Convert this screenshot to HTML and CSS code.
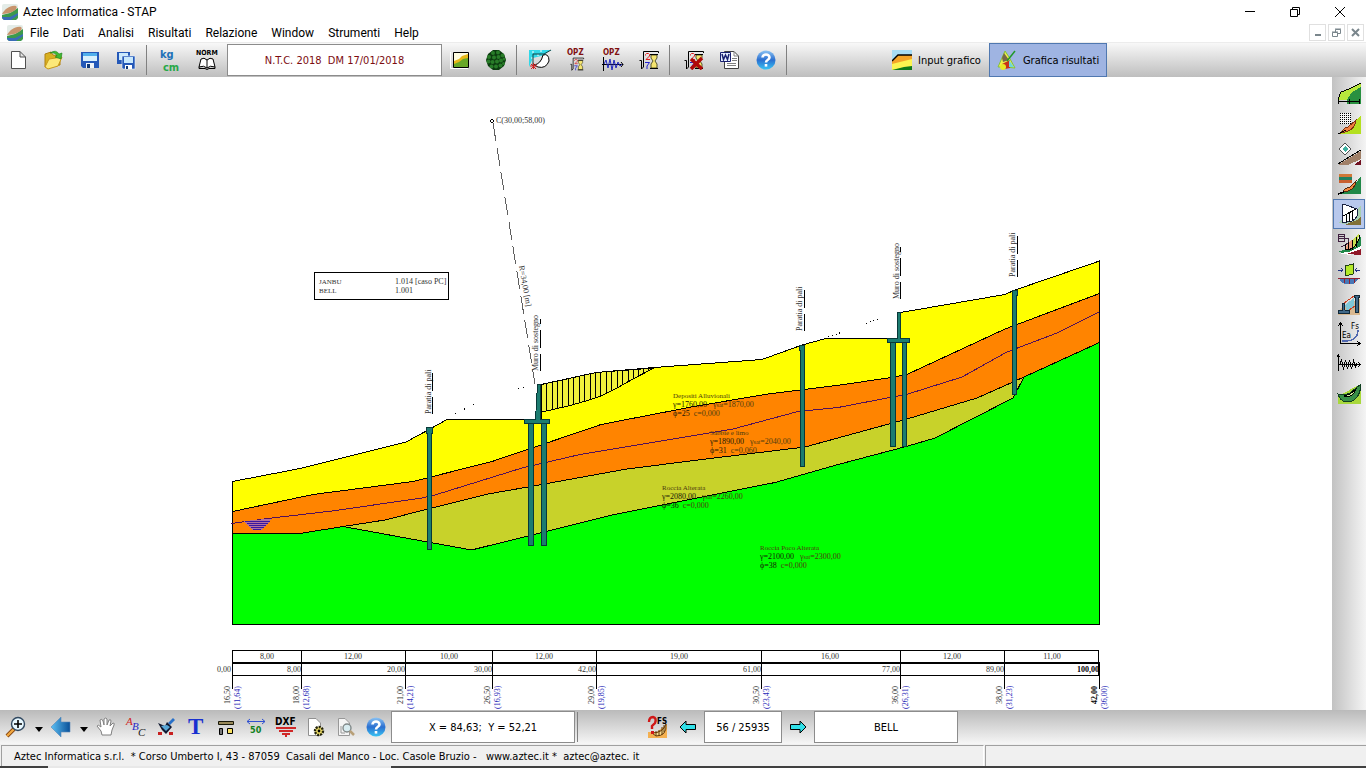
FILE: index.html
```html
<!DOCTYPE html>
<html lang="it">
    <head>
        <meta charset="utf-8">
        <title>Aztec Informatica - STAP</title>
        <link rel="stylesheet" href="styles.css">
    </head>
    <body>
        <svg class="defs" width="0" height="0" aria-hidden="true">
            <defs>
                <linearGradient id="blue" x1="0" y1="0" x2="0" y2="1">
                    <stop offset="0" stop-color="#8cc4f4"/>
                    <stop offset="0.5" stop-color="#2b6fd0"/>
                    <stop offset="1" stop-color="#38c4f4"/>
                </linearGradient>
                <linearGradient id="arrow" x1="0" y1="0" x2="1" y2="0">
                    <stop offset="0" stop-color="#5cc0f4"/>
                    <stop offset="1" stop-color="#0a5098"/>
                </linearGradient>
                <symbol id="logo" viewBox="0 0 16 16">
                    <rect width="16" height="16" rx="2" fill="#e4ece8"/>
                    <path d="M0 11L8 9L16 4V14L14 16H2L0 14Z" fill="#3c9a4c"/>
                    <path d="M0 13L8 13L16 9V11L9 16H2L0 14Z" fill="#3a6cb8"/>
                    <path d="M0 10C3 5 8 1 14 2C17 5 10 10 0 10Z" fill="#c8946c"/>
                </symbol>
                <symbol id="help" viewBox="0 0 20 20">
                    <circle cx="10" cy="10" r="9.5" fill="url(#blue)"/>
                    <path d="M6.5 7.5C6.5 3.5 13.5 3.5 13.5 7.5C13.5 10 10 9.5 10 12.5" fill="none" stroke="#fff" stroke-width="2.6"/>
                    <rect x="8.7" y="14" width="2.6" height="2.6" fill="#fff"/>
                </symbol>
                <symbol id="calc" viewBox="0 0 20 20">
                    <path d="M0.500 10.500H2.500V19L4.500 17V1.500H19.500V3" fill="none" stroke="#000"/>
                    <path d="M12 5H18V8L16 11L18 14V18H12V14L14 11L12 8Z" fill="#f4e470" stroke="#303010" stroke-width=".8"/>
                    <path d="M11 4.500H19M11 18.500H19" stroke="#000"/>
                    <path d="M6.500 5.500V4.500L7.500 3.500H9.500L10.500 4.500V6L7 9.500H11" fill="none" stroke="#e02020"/>
                    <path d="M6 12.500H10.500L8 16V19" fill="none" stroke="#2020d0"/>
                </symbol>
            </defs>
        </svg>

        <header class="titlebar">
            <svg class="logo"><use href="#logo"/></svg>
            <span class="title">Aztec Informatica - STAP</span>
            <div class="window-controls">
                <button type="button" aria-label="Riduci"><svg width="12" height="12"><path d="M1 5.500H11" stroke="#000"/></svg></button>
                <button type="button" aria-label="Ripristina"><svg width="12" height="12" fill="none" stroke="#000"><path d="M1.500 3.500H8.500V10.500H1.500ZM3.500 3.500V1.500H10.500V8.500H8.500"/></svg></button>
                <button type="button" aria-label="Chiudi"><svg width="12" height="12" stroke="#000"><path d="M1 1L11 11M11 1L1 11"/></svg></button>
            </div>
        </header>

        <nav class="menubar">
            <svg class="logo"><use href="#logo"/></svg>
            <ul class="menu-items">
                <li><a href="#">File</a></li>
                <li><a href="#">Dati</a></li>
                <li><a href="#">Analisi</a></li>
                <li><a href="#">Risultati</a></li>
                <li><a href="#">Relazione</a></li>
                <li><a href="#">Window</a></li>
                <li><a href="#">Strumenti</a></li>
                <li><a href="#">Help</a></li>
            </ul>
            <div class="mdi-controls">
                <button type="button" aria-label="Riduci"><svg width="9" height="9"><path d="M2 7H8" stroke="#7a868c" stroke-width="2"/></svg></button>
                <button type="button" aria-label="Ripristina"><svg width="9" height="9" fill="none" stroke="#7a868c"><path d="M0.500 4.500H5.500V8.500H0.500ZM0 4H6M3.500 4V1.500H8.500V5.500H6M3 1H9"/></svg></button>
                <button type="button" aria-label="Chiudi"><svg width="9" height="9" stroke="#7a868c" stroke-width="2"><path d="M1 1L8 8M8 1L1 8"/></svg></button>
            </div>
        </nav>

        <div class="toolbar">
            <button class="tool" type="button" aria-label="Nuovo"><svg width="20" height="20" viewBox="0 0 20 20"><path d="M3.500 1.500H12L17.500 7V18.500H3.500ZM12 1.500V7H17.500" fill="#fff" stroke="#505050"/></svg></button>
            <button class="tool" type="button" aria-label="Apri"><svg width="20" height="20" viewBox="0 0 20 20"><path d="M1 17V4L7 2L9 5L16 6V15Z" fill="#d8b020" stroke="#b08010"/><path d="M1 17L5 9L18 7L14 16L4 19Z" fill="#fce878" stroke="#c89818"/><path d="M6 3Q12 -1 15 4L18 3L17 9L11 7L13 6Q11 2 6 3Z" fill="#40b830" stroke="#188018" stroke-width=".6"/></svg></button>
            <button class="tool" type="button" aria-label="Salva"><svg width="20" height="20" viewBox="0 0 20 20"><path d="M1 2H19V18H3L1 16Z" fill="#2458b8"/><path d="M3 3H17V11H3Z" fill="#d8f0fc"/><path d="M3 3H17V6H3Z" fill="#50b0ec"/><path d="M6 13H14V18H6Z" fill="#f0f4f8"/><path d="M7 14H10V18H7Z" fill="#103878"/></svg></button>
            <button class="tool" type="button" aria-label="Salva tutto"><svg width="20" height="20" viewBox="0 0 20 20"><path d="M1 2H14V14H1Z" fill="#2458b8"/><path d="M3 3H12V10H3Z" fill="#c8e8fc"/><path d="M6 6H19V19H7L6 18Z" fill="#2458b8" stroke="#e8f4ff" stroke-width=".6"/><path d="M8 7H17V13H8Z" fill="#c8e8fc"/><path d="M9 15H16V19H9Z" fill="#fff"/><path d="M10 16H12V19H10Z" fill="#103878"/></svg></button>
            <span class="separator"></span>
            <button class="tool" type="button" aria-label="Unità di misura"><svg width="24" height="28" viewBox="0 0 24 28"><text class="unit" x="1" y="12" fill="#2070b8">kg</text><text class="unit" x="4" y="25" fill="#28a848">cm</text></svg></button>
            <button class="tool" type="button" aria-label="Normativa"><svg width="24" height="24" viewBox="0 0 24 24"><text class="norm" x="1" y="7">NORM</text><path d="M12 12Q9 9 6 11L4 19Q9 17 12 20Q15 17 20 19L18 11Q15 9 12 12V20" fill="#fff" stroke="#000"/><path d="M4 19V20.500H10L12 21.500L14 20.500H20V19" fill="none" stroke="#000"/></svg></button>
            <input class="field norm-field" type="text" value="N.T.C. 2018  DM 17/01/2018" aria-label="Normativa corrente" readonly>
            <button class="tool" type="button" aria-label="Stratigrafia"><svg width="20" height="20" viewBox="0 0 20 20"><path d="M0.500 2V18.500H18" fill="none" stroke="#fff"/><path d="M4 3H18V17H4Z" fill="#fffce0"/><path d="M4 11L9 9L12 6L18 4V17H4Z" fill="#e8b818"/><path d="M4 14L9 12L13 9L18 8V17H4Z" fill="#68a828"/><path d="M3.500 2.500H18.500V17.500H3.500Z" fill="none" stroke="#000"/></svg></button>
            <button class="tool" type="button" aria-label="Terreni"><svg width="20" height="20" viewBox="0 0 20 20"><path d="M7 0H13L18 4L20 10L18 16L13 20H7L2 16L0 10L2 4Z" fill="#0c3c10"/><g fill="#287c28"><circle cx="7" cy="3" r="2"/><circle cx="12" cy="2.500" r="2"/><circle cx="16.500" cy="5.500" r="2"/><circle cx="3" cy="7" r="2"/><circle cx="8" cy="7.500" r="2"/><circle cx="12.500" cy="7" r="2"/><circle cx="2.500" cy="11.500" r="2"/><circle cx="6.500" cy="12" r="2"/><circle cx="11" cy="11.500" r="2"/><circle cx="15" cy="10.500" r="2"/><circle cx="18" cy="9" r="1.500"/><circle cx="5.500" cy="16.500" r="2"/><circle cx="10" cy="16.500" r="2"/><circle cx="14.500" cy="15.500" r="2"/><circle cx="17.500" cy="13.500" r="1.500"/></g></svg></button>
            <span class="separator"></span>
            <button class="tool" type="button" aria-label="Superfici"><svg width="24" height="22" viewBox="0 0 24 22"><path d="M0 1H24Q19 1 16 6L4 9L0 18Z" fill="#30d8e8"/><path d="M3 3H5M8 6H10M2 9H4M11 2H13" stroke="#fff"/><path d="M4 17V5H15L22 1" fill="none" stroke="#104040"/><path d="M14 6Q20 4 20 12Q17 20 9 18L5 16Q12 15 14 6Z" fill="#fff" stroke="#000"/><path d="M1 17H8M4.500 14V20M2 15L7 20M7 15L2 20" stroke="#d02020"/></svg></button>
            <button class="tool" type="button" aria-label="Opzioni analisi"><svg width="24" height="24" viewBox="0 0 24 24"><text class="opz" x="2" y="7">OPZ</text><svg x="3" y="9" width="18" height="14"><use href="#calc"/></svg></svg></button>
            <button class="tool" type="button" aria-label="Opzioni sismiche"><svg width="24" height="24" viewBox="0 0 24 24"><text class="opz" x="2" y="7">OPZ</text><path d="M2.500 9V23M1 16.500H22M20 14L22 16.500L20 19" fill="none" stroke="#000"/><path d="M3 16L5 12L7 20L9 11L11 22L13 12L15 20L17 14L19 18L21 16" fill="none" stroke="#2028c0"/></svg></button>
            <button class="tool" type="button" aria-label="Analisi"><svg width="20" height="20"><use href="#calc"/></svg></button>
            <span class="separator"></span>
            <button class="tool" type="button" aria-label="Annulla analisi"><svg width="20" height="20" viewBox="0 0 20 20"><use href="#calc"/><path d="M7 9L18 19M18 8L7 19" stroke="#b00808" stroke-width="3.500"/></svg></button>
            <button class="tool" type="button" aria-label="Relazione"><svg width="20" height="20" viewBox="0 0 20 20"><path d="M4.500 1.500H14L18.500 6V18.500H4.500Z" fill="#fff" stroke="#404040"/><path d="M14 1.500V6H18.500M12 8.500H17M12 10.500H17M7 13.500H16M7 15.500H16" fill="none" stroke="#808080"/><path d="M0.500 2.500H10.500V11.500H0.500Z" fill="#e8f0ff" stroke="#182070"/><path d="M2 4L3.500 9.500L5.500 5L7.500 9.500L9 4" fill="none" stroke="#182070" stroke-width="1.500"/></svg></button>
            <button class="tool" type="button" aria-label="Guida"><svg width="20" height="20"><use href="#help"/></svg></button>
            <span class="separator"></span>
            <div class="views">
                <button class="view" type="button"><svg width="20" height="20" viewBox="0 0 20 20"><path d="M0 0H20V20H0Z" fill="#a8dcf4"/><path d="M0 11L6 5H20V20H0Z" fill="#f4a428"/><path d="M0 14L20 9V20H0Z" fill="#fcf450"/><path d="M0 20L12 17L20 16V20Z" fill="#107818"/><path d="M0 11L6 5H20" fill="none" stroke="#000" stroke-width="1.400"/></svg>Input grafico</button>
                <button class="view active" type="button"><svg width="20" height="20" viewBox="0 0 20 20"><path d="M8 1L1 17H8L18 18L12 7Z" fill="#f0f048" stroke="#80c040"/><path d="M7 3L12 10L6 12L5 8Z" fill="#786848"/><path d="M5 14L13 10V18L8 19Z" fill="#c83018"/><path d="M12 10L17 17H12Z" fill="#70d8d8"/><path d="M10 11L18 1" stroke="#209828" stroke-width="1.500"/><circle cx="6" cy="17" r="3" fill="#e8e828"/></svg>Grafica risultati</button>
            </div>
        </div>

        <main class="workspace">
            <svg class="drawing" viewBox="0 77 1332 633" role="img" aria-label="Sezione del pendio">
                <!-- strata, from the bedrock up -->
                <path fill="#00ff00" d="M232.500 533.500H300L343 526.500L471 550L700 450L1099.500 342.500V624.500H232.500Z"/>
                <path class="layer" fill="#c8d22a" d="M343 526.500L471.500 550L560 528L610 515.500L697 498L775 482.500L840 464L908 446L935 438L1013 398L1024 377L1013 382L977 398L907 419L805 447L710 458.500L627 469L528 487L488 494L428 509L385 520Z"/>
                <path fill="#00ff00" d="M471.500 550L560 528L610 515.500L697 498L775 482.500L840 464L908 446L935 438L1013 398L1024 377L1099.500 342.500V624.500H471Z"/>
                <path class="layer" fill="#ff8400" d="M232.500 511.500L313 494.500L413 481.500L492 461.500L535 447L601 424.500L694 406.500L768 394L840 385L895 377L908 374L1005 329L1099.500 293.500V342.500L1024 377L1013 382L977 398L907 419L805 447L710 458.500L627 469L528 487L488 494L428 509L385 520L343 526.500L300 533.500H232.500Z"/>
                <path class="layer" fill="#ffff00" d="M232.500 481.500L300 468.500L406 442L430 429L447 419.500H541V384.500L596 372.500L654 367.500L762 359.500L802 345L826 338.500H900.500V312.500L1005 294.500L1015 290L1099.500 261V293.500L1005 329L908 374L895 377L840 385L768 394L694 406.500L601 424.500L535 447L492 461.500L413 481.500L313 494.500L232.500 511.500Z"/>
                <path class="line" d="M343 526.500L471.500 550L560 528L610 515.500L697 498L775 482.500L840 464L908 446L935 438L1013 398L1024 377"/>
                <path class="line" d="M232.500 481V624.500H1099.500V261"/>

                <!-- water table -->
                <path class="water" d="M231 523.500L272 518L332 511L422 498L435 495L522 468L580 454.500L652 442.500L733 429L798 411.500L838 407.500L908 394L962 377L1007 352L1057 333L1099 312"/>
                <path d="M244 521L272 518.500L262 530H252Z" fill="#b070a0"/>
                <path class="water-mark" d="M245 521.500H270M247 523.500H268M249 525.500H266M251 527.500H264M253 529.500H261"/>

                <!-- slices of the sliding mass -->
                <path class="layer" fill="#f2f23c" d="M541.500 384.500L596 372.500L654 368L633 379L617 388L601 396L586 401L570 405.500L553 409.500L541.500 412Z"/>
                <path class="line" d="M546.500 383.500V411M552.500 382V410M557.500 381V408M562.500 380V407M568.500 378.500V406M573.500 377.500V405M579.500 376V403M584.500 375V401M590.500 374V399M595.500 372.500V398M600.500 372V396M606.500 372V393M611.500 371.500V391M617.500 371V388M622.500 370.500V385M628.500 370V382M633.500 370V379M638.500 369.500V376M643.500 369V373M648.500 368.500V371"/>

                <!-- piles and retaining walls -->
                <g class="pile">
                    <path d="M427.500 433.500V549H431.500V433.500H432.500V427.500H426.500V433.500Z"/>
                    <path d="M528.500 423.500H533.500V545H528.500ZM541.500 423.500H546.500V545H541.500Z"/>
                    <path d="M535.500 419.500L537.500 384.500H540.500V419.500H549.500V423.500H524.500V419.500Z"/>
                    <path d="M800.500 350.500V466H804.500V345.500H799.500V350.500Z"/>
                    <path d="M890.500 342.500H895.500V446H890.500ZM902.500 342.500H906.500V446H902.500Z"/>
                    <path d="M897.500 338.500V312.500H900.500V338.500H909.500V342.500H887.500V338.500Z"/>
                    <path d="M1012.500 290.500H1017.500V295.500H1016.500V394H1012.500Z"/>
                </g>
                <path class="dots" d="M455 413.500L476 403.500" stroke-dasharray="1 9"/>
                <path class="dots" d="M518 388.500L527 386.500" stroke-dasharray="1 4"/>
                <path class="dots" d="M828 337L841 332.500M866 323.500L880 318.500" stroke-dasharray="1 3"/>

                <!-- centre and radius of the surface -->
                <path d="M492 119L494 121L492 123L490 121Z" fill="none" stroke="#000"/>
                <path d="M493 123L535 384" stroke="#606060" stroke-dasharray="18 7" fill="none"/>
                <text x="496" y="123">C(30,00;58,00)</text>
                <text transform="translate(519 266) rotate(80)">R=34,00 [m]</text>

                <path class="line" d="M314.500 272.500H448.500V299.500H314.500Z"/>
                <text x="319" y="284" class="small">JANBU</text>
                <text x="395" y="284">1.014&#160;[caso PC]</text>
                <text x="319" y="293" class="small">BELL</text>
                <text x="395" y="293">1.001</text>

                <!-- labels of the works -->
                <g>
                    <text transform="translate(431 414) rotate(-90)">Paratia di pali</text>
                    <text transform="translate(538 371) rotate(-90)">Muro di sostegno</text>
                    <text transform="translate(802 331) rotate(-90)">Paratia di pali</text>
                    <text transform="translate(899 299) rotate(-90)">Muro di sostegno</text>
                    <text transform="translate(1015 277) rotate(-90)">Paratia di pali</text>
                </g>
                <path class="line" d="M432.500 414V397M432.500 391V373M540.500 371V354M540.500 348V330M540.500 324V319M804.500 331V314M804.500 308V290M900.500 299V282M900.500 276V258M900.500 252V247M1017.500 277V260M1017.500 254V236"/>

                <g class="soil">
                    <text x="673" y="398" class="small">Depositi Alluvionali</text>
                    <text x="673" y="407"><tspan class="strong">γ=1760,00</tspan>&#160;&#160; γ<tspan class="sub">sat</tspan>=1870,00</text>
                    <text x="673" y="416"><tspan class="strong">ϕ=25</tspan>&#160; c=0,000</text>
                    <text x="710" y="435" class="small">Sabbie e limo</text>
                    <text x="710" y="444"><tspan class="strong">γ=1890,00</tspan>&#160;&#160; γ<tspan class="sub">sat</tspan>=2040,00</text>
                    <text x="710" y="453"><tspan class="strong">ϕ=31</tspan>&#160; c=0,060</text>
                    <text x="662" y="490" class="small">Roccia Alterata</text>
                    <text x="662" y="499"><tspan class="strong">γ=2080,00</tspan>&#160;&#160; γ<tspan class="sub">sat</tspan>=2260,00</text>
                    <text x="662" y="508"><tspan class="strong">ϕ=36</tspan>&#160; c=0,000</text>
                    <text x="760" y="550" class="small">Roccia Poco Alterata</text>
                    <text x="760" y="559"><tspan class="strong">γ=2100,00</tspan>&#160;&#160; γ<tspan class="sub">sat</tspan>=2300,00</text>
                    <text x="760" y="568"><tspan class="strong">ϕ=38</tspan>&#160; c=0,000</text>
                </g>

                <!-- distances and elevations -->
                <path class="line" d="M232 650.500H1099M232 675.500H1099M232.500 650V689M301.500 650V689M405.500 650V689M492.500 650V689M596.500 650V689M761.500 650V689M900.500 650V689M1004.500 650V689M1098.500 650V675M1099.500 663V689"/>
                <path d="M232 663H1100" stroke="#000" stroke-width="2"/>
                <g text-anchor="middle">
                    <text x="267" y="659">8,00</text><text x="353" y="659">12,00</text><text x="449" y="659">10,00</text><text x="544" y="659">12,00</text>
                    <text x="679" y="659">19,00</text><text x="830" y="659">16,00</text><text x="952" y="659">12,00</text><text x="1052" y="659">11,00</text>
                </g>
                <g text-anchor="end">
                    <text x="231" y="672">0,00</text><text x="301" y="672">8,00</text><text x="405" y="672">20,00</text><text x="492" y="672">30,00</text><text x="596" y="672">42,00</text>
                    <text x="761" y="672">61,00</text><text x="900" y="672">77,00</text><text x="1004" y="672">89,00</text><text x="1099" y="672" class="strong">100,00</text>
                </g>
                <g>
                    <text transform="translate(230 704) rotate(-90)">16,50</text><text transform="translate(299 704) rotate(-90)">18,00</text><text transform="translate(403 704) rotate(-90)">21,00</text>
                    <text transform="translate(490 704) rotate(-90)">26,50</text><text transform="translate(594 704) rotate(-90)">29,00</text><text transform="translate(759 704) rotate(-90)">30,50</text>
                    <text transform="translate(898 704) rotate(-90)">36,00</text><text transform="translate(1002 704) rotate(-90)">38,00</text><text class="strong" transform="translate(1097 704) rotate(-90)">42,00</text>
                </g>
                <g class="depth">
                    <text transform="translate(240 709) rotate(-90)">(11,64)</text><text transform="translate(309 709) rotate(-90)">(12,68)</text><text transform="translate(413 709) rotate(-90)">(14,21)</text>
                    <text transform="translate(500 709) rotate(-90)">(16,93)</text><text transform="translate(604 709) rotate(-90)">(19,85)</text><text transform="translate(769 709) rotate(-90)">(23,43)</text>
                    <text transform="translate(908 709) rotate(-90)">(26,31)</text><text transform="translate(1012 709) rotate(-90)">(31,23)</text><text transform="translate(1107 709) rotate(-90)">(36,00)</text>
                </g>
            </svg>

            <aside class="sidebar">
                <button type="button" aria-label="Pendio"><svg viewBox="0 0 24 24"><path d="M1 16L4 10L12 7L24 1V18H1Z" fill="#b8e83c"/><path d="M10 18L14 11L24 5V22H10Z" fill="#289040"/><path d="M1 17L4 10L12 7L24 1M1.500 16V22M1 19.500H23M12.500 17V22M22.500 17V22" fill="none" stroke="#000"/></svg></button>
                <button type="button" aria-label="Maglia centri"><svg viewBox="0 0 24 24"><path d="M3 1H14V12H3Z" fill="#f4f4f4"/><path d="M3 1.500H14M3 3.500H14M3 5.500H14M3 7.500H14M3 9.500H14M3 11.500H14" stroke="#000" stroke-dasharray="1 1"/><path d="M1 22L14 14L24 3V22Z" fill="#b4e020"/><path d="M4 21Q7 15 11 15L19 8Q18 19 4 21Z" fill="#f08040" stroke="#803010"/><path d="M1 22L9 18" stroke="#000"/></svg></button>
                <button type="button" aria-label="Tensioni"><svg viewBox="0 0 24 24"><path d="M8 1L14 7L8 13L2 7Z" fill="#fff" stroke="#505050"/><path d="M8 4L11 7L8 10L5 7Z" fill="#40b0a0"/><path d="M1 23L12 16L24 9V17L11 23Z" fill="#a08068"/><path d="M17 23L24 18V23Z" fill="#701020"/><path d="M1 22L12 15L24 8" fill="none" stroke="#000"/></svg></button>
                <button type="button" aria-label="Strati"><svg viewBox="0 0 24 24"><path d="M2 2H15V5H2Z" fill="#d07838"/><path d="M2 5H15V8H2Z" fill="#208060"/><path d="M2 8H15V11H2Z" fill="#c86030"/><path d="M4 22L15 16L24 4V22Z" fill="#208848"/><path d="M6 20Q8 15 12 16L19 9Q18 19 6 20Z" fill="#f08840" stroke="#502810"/><path d="M1 22L7 20" stroke="#000" stroke-width="1.500"/></svg></button>
                <button class="active" type="button" aria-label="Superfici e strisce"><svg viewBox="0 0 24 24"><path d="M8 23L20 17L24 8V23Z" fill="#807038"/><path d="M1 21L8 14L20 7L24 4V14L20 18L9 22Z" fill="#a8d0b0"/><path d="M5 14L6 2L20 7V14Q17 20 10 20H5Z" fill="#fff" stroke="#182040"/><path d="M9.500 12V20M12.500 10V20M15.500 8V18M6 14L19 7" fill="none" stroke="#000"/></svg></button>
                <button type="button" aria-label="Forze strisce"><svg viewBox="0 0 24 24"><path d="M1.500 2.500H7.500V9.500H1.500ZM2 4.500H7M2 6.500H7M7 6.500H11.500V11L4 15" fill="none" stroke="#402040"/><path d="M1 20L9 17L24 5V22L14 22Z" fill="#208848"/><path d="M8 17L11 11L15 8V17Z" fill="#f0a080"/><path d="M15 8L22 2L20 14L15 17Z" fill="#c8e050"/><path d="M1 21L12 20L24 14V18L13 23Z" fill="#fff"/><path d="M10 22L24 17V23Z" fill="#901828"/><path d="M8.500 17V12M11.500 18V10M15.500 18V8M19.500 15V5M8 18Q20 18 23 3" fill="none" stroke="#000"/></svg></button>
                <button type="button" aria-label="Azioni striscia"><svg viewBox="0 0 24 24"><path d="M8 4L16 2V12L8 14Z" fill="#b4e828" stroke="#204010"/><path d="M1 8H6M4 6L6 8L4 10M23 8H18M20 6L18 8L20 10" fill="none" stroke="#203080"/><path d="M2 16H22L17 22H8L4 20Z" fill="#4878b8"/><path d="M1 16.500H23M7 17V21M12 17V22M17 17V21" stroke="#902030"/></svg></button>
                <button type="button" aria-label="Muri"><svg viewBox="0 0 24 24"><path d="M1 19L13 10L23 7V23H1Z" fill="#d8b890"/><path d="M8 13L17 6V16L10 20Z" fill="#80c8d8"/><path d="M5 11H7L8 18H12V21H1V18H5Z" fill="#406888" stroke="#102838"/><path d="M17 3H22V5H21V20H18V5H17Z" fill="#406888" stroke="#102838"/><path d="M7 11L17 4M12 18L18 14" stroke="#c84020"/></svg></button>
                <button type="button" aria-label="Diagramma Ea Fs"><svg viewBox="0 0 24 24"><path d="M3.500 1V21.500H23M1 4L3.500 1L6 4M20 19L23 21.500L20 24" fill="none" stroke="#000"/><text class="axis" x="5" y="16">Ea</text><text class="axis" x="14" y="7">Fs</text><path d="M5 19Q21 20 21 8" fill="none" stroke="#5068b0" stroke-width="1.400"/></svg></button>
                <button type="button" aria-label="Accelerogramma"><svg viewBox="0 0 24 24"><path d="M1.500 3V19M0 5L1.500 3L3 5M1 12.500H23M21 10L23 12.500L21 15" fill="none" stroke="#000"/><path d="M3 12L4.500 7L6.500 18L8.500 8L10.500 17L12.500 8L14.500 17L16.500 9L18.500 15L20 11" fill="none" stroke="#000"/></svg></button>
                <button type="button" aria-label="Spostamenti"><svg viewBox="0 0 24 24"><path d="M1 22V14L24 2V22Z" fill="#a8d83c"/><path d="M1 12L7 13L13 11L24 2Q23 20 9 20Q3 19 1 12Z" fill="#389048" stroke="#104020"/><path d="M7 14L13 12L19 7Q17 15 8 15Z" fill="#d0f0a0" stroke="#000"/></svg></button>
            </aside>
        </main>

        <div class="toolbar toolbar-bottom">
            <button class="tool" type="button" aria-label="Zoom"><svg width="22" height="22" viewBox="0 0 22 22"><path d="M2 20L9 13" stroke="#804010" stroke-width="4"/><path d="M2 20L9 13" stroke="#f0a840" stroke-width="2.400"/><circle cx="13" cy="8" r="6.500" fill="#e8f8ff" stroke="#304860" stroke-width="1.400"/><path d="M9 8H17M13 4V12" stroke="#000" stroke-width="1.600"/></svg></button>
            <button class="drop" type="button" aria-label="Opzioni zoom"><svg width="8" height="5"><path d="M0 0H8L4 5Z"/></svg></button>
            <button class="tool" type="button" aria-label="Indietro"><svg width="22" height="22" viewBox="0 0 22 22"><path d="M1 11L11 1V6H20V16H11V21Z" fill="url(#arrow)" stroke="#5888b8" stroke-width=".6"/></svg></button>
            <button class="drop" type="button" aria-label="Viste precedenti"><svg width="8" height="5"><path d="M0 0H8L4 5Z"/></svg></button>
            <button class="tool" type="button" aria-label="Sposta"><svg width="20" height="20" viewBox="0 0 20 20"><path d="M6 18L5 14L1 9Q2 7 5 10L4 3Q6 1 7 4L8 8V2Q10 0 11 2V8L13 3Q15 2 15 4L14 9L17 6Q19 6 18 8L16 13L15 18Z" fill="#fff" stroke="#808080"/></svg></button>
            <button class="tool" type="button" aria-label="Testi"><svg width="24" height="30" viewBox="0 0 24 30"><text class="abc" x="2" y="13" fill="#d02020">A</text><text class="abc" x="8" y="18" fill="#2828c8">B</text><text class="abc" x="14" y="24" fill="#181818">C</text></svg></button>
            <button class="tool" type="button" aria-label="Colori"><svg width="20" height="20" viewBox="0 0 20 20"><path d="M12 6L17 1L19 3L14 8Z" fill="#2870c8"/><path d="M2 6L9 9L11 5L16 10L10 17L6 13Z" fill="#101830"/><path d="M5 9L11 8L14 10L10 14Z" fill="#58a8d8"/><path d="M2 15H6V18H2ZM13 15H17V18H13Z" fill="#c82020"/></svg></button>
            <button class="tool" type="button" aria-label="Carattere"><svg width="24" height="32" viewBox="0 0 24 32"><text class="big-t" x="4" y="23">T</text></svg></button>
            <button class="tool" type="button" aria-label="Legenda"><svg width="20" height="20" viewBox="0 0 20 20"><path d="M2.500 4.500H17.500V7.500H2.500Z" fill="#988858" stroke="#181808"/><path d="M3.500 11.500H6.500V17.500H3.500Z" fill="#787878" stroke="#000"/><path d="M11.500 11.500H16.500V16.500H11.500Z" fill="#f8e060" stroke="#000"/></svg></button>
            <button class="tool" type="button" aria-label="Quote"><svg width="20" height="20" viewBox="0 0 20 20"><path d="M1 4.500H19M4 2L1 4.500L4 7M16 2L19 4.500L16 7" fill="none" stroke="#3050d0"/><text class="dist" x="4" y="16">50</text></svg></button>
            <button class="tool" type="button" aria-label="Esporta DXF"><svg width="22" height="22" viewBox="0 0 22 22"><text class="dxf" x="0" y="9">DXF</text><path d="M1 12H21M4 15H18M7 18H15M10 20H12" stroke="#d02828" stroke-width="2"/></svg></button>
            <button class="tool" type="button" aria-label="Impostazioni"><svg width="20" height="20" viewBox="0 0 20 20"><path d="M2.500 1.500H10L14.500 6V18.500H2.500Z" fill="#fff" stroke="#909090"/><circle cx="13" cy="14" r="4" fill="#f0e068" stroke="#202008" stroke-width="2.400" stroke-dasharray="2 1"/><circle cx="13" cy="14" r="1.400"/></svg></button>
            <button class="tool" type="button" aria-label="Anteprima"><svg width="20" height="20" viewBox="0 0 20 20"><path d="M2.500 1.500H9L13.500 6V18.500H2.500Z" fill="#f4f4f4" stroke="#989898"/><path d="M5 9V16H9" fill="none" stroke="#989898"/><circle cx="11" cy="11" r="4" fill="#d8ecf0" stroke="#808888" stroke-width="1.400"/><path d="M14 14L18 18" stroke="#b8a078" stroke-width="2.500"/></svg></button>
            <button class="tool" type="button" aria-label="Guida"><svg width="20" height="20"><use href="#help"/></svg></button>
            <input class="field coord-field" type="text" value="X = 84,63;  Y = 52,21" aria-label="Coordinate" readonly>
            <span class="separator"></span>
            <div class="results">
                <button class="tool" type="button" aria-label="Fattore di sicurezza"><svg width="22" height="24" viewBox="0 0 22 24"><path d="M1 23L1 17L10 17L20 9V23Z" fill="#f4b050"/><path d="M5 18Q16 18 19 9Q20 21 9 21ZM9 16V21M12 15V21M15 12V20M17 10V17" fill="#f8dc90" stroke="#603808"/><path d="M2 7Q2 2 6 2Q10 3 8 8L5 11V14" fill="none" stroke="#d01818" stroke-width="2.400"/><path d="M4 16H7V19H4Z" fill="#d01818"/><text class="fs" x="10" y="9">FS</text></svg></button>
                <button class="tool" type="button" aria-label="Precedente"><svg width="18" height="14" viewBox="0 0 18 14"><path d="M1 7L7 1V4.500H16.500V9.500H7V13Z" fill="#30e0e8" stroke="#000"/></svg></button>
                <input class="field index-field" type="text" value="56 / 25935" aria-label="Superficie" readonly>
                <button class="tool" type="button" aria-label="Successiva"><svg width="18" height="14" viewBox="0 0 18 14"><path d="M17 7L11 1V4.500H1.500V9.500H11V13Z" fill="#30e0e8" stroke="#000"/></svg></button>
                <input class="field method-field" type="text" value="BELL" aria-label="Metodo" readonly>
            </div>
        </div>

        <footer class="statusbar">
            <div class="panel address">Aztec Informatica s.r.l.&#160; * Corso Umberto I, 43 - 87059&#160; Casali del Manco - Loc. Casole Bruzio -&#160;&#160; www.aztec.it *&#160; aztec@aztec. it</div>
            <div class="panel"></div>
        </footer>
    </body>
</html>
```
FILE: styles.css
```css
:root {
    --ui-font: "DejaVu Sans Condensed", "Noto Sans", sans-serif;
    --menu-font: Roboto, "Open Sans", sans-serif;
    --line: #8c8c8c;
    --active: #9fb4e2;
}

*, *::before, *::after {
    box-sizing: border-box;
}

body {
    display: flex;
    flex-direction: column;
    height: 100vh;
    margin: 0;
    overflow: hidden;
    background: #fff;
    color: #000;
    font-family: var(--ui-font);
    font-size: 11px;
}

button {
    display: flex;
    align-items: center;
    justify-content: center;
    flex: none;
    margin: 0;
    padding: 0;
    border: 0;
    background: none;
    color: inherit;
    font: inherit;
}

.defs {
    position: absolute;
}

.logo {
    width: 16px;
    height: 16px;
}

/* title and menu */
.titlebar {
    display: flex;
    align-items: center;
    gap: 5px;
    height: 23px;
    padding: 0 4px 0 2px;
    font-family: var(--menu-font);
    font-size: 12px;
}

.window-controls, .mdi-controls {
    display: flex;
    margin-left: auto;
}

.window-controls button {
    width: 45px;
    height: 20px;
}

.menubar {
    display: flex;
    align-items: center;
    height: 20px;
    padding: 0 2px 0 7px;
    border-bottom: 1px solid #ececec;
    font-family: var(--menu-font);
    font-size: 12px;
}

.menu-items {
    display: flex;
    gap: 14px;
    margin: 0;
    padding: 0 0 0 7px;
    list-style: none;
}

.menu-items a {
    color: #000;
    text-decoration: none;
}

.mdi-controls {
    gap: 2px;
}

.mdi-controls button {
    width: 17px;
    height: 17px;
    border: 1px solid #e0e0e0;
}

/* toolbars */
.toolbar {
    display: flex;
    align-items: center;
    flex: none;
    height: 34px;
    background: linear-gradient(#f8f8f8, #bebebe);
}

.tool {
    width: 36px;
    height: 34px;
}

.separator {
    flex: none;
    width: 1px;
    height: 30px;
    margin: 0 6px 0 2px;
    background: #808080;
}

.field {
    flex: none;
    height: 32px;
    padding: 0;
    border: 1px solid var(--line);
    background: #fff;
    color: #000;
    font: 11px var(--ui-font);
    text-align: center;
    white-space: pre;
}

.norm-field {
    width: 215px;
    margin-left: 2px;
    color: #7c0c10;
}

.views {
    display: flex;
    margin-left: 91px;
}

.view {
    gap: 6px;
    height: 34px;
    padding: 0 7px;
    border: 1px solid transparent;
}

.view.active {
    border-color: #5078b0;
    background: var(--active);
}

.toolbar-bottom {
    padding-left: 1px;
    background: linear-gradient(#bababa, #f6f6f6);
}

.toolbar-bottom .tool {
    width: 30px;
}

.drop {
    width: 15px;
    height: 34px;
    padding-top: 4px;
}

.coord-field {
    width: 184px;
}

.results {
    display: flex;
    align-items: center;
    margin-left: 59px;
}

.results .field {
    margin: 0 1px;
}

.index-field {
    width: 78px;
}

.method-field {
    width: 144px;
}

/* drawing */
.workspace {
    display: flex;
    flex: 1;
    min-height: 0;
}

.drawing {
    flex: 1;
    min-width: 0;
    height: 100%;
    font-family: "Liberation Serif", serif;
    font-size: 8px;
    fill: #303030;
    shape-rendering: crispEdges;
}

.small {
    font-size: 7px;
}

.layer {
    stroke: #000;
}

.line {
    fill: none;
    stroke: #000;
}

.water {
    fill: none;
    stroke: #50105c;
}

.water-mark {
    stroke: #3818a0;
}

.pile {
    fill: #1c7c70;
    stroke: #083838;
}

.dots {
    fill: none;
    stroke: #000;
}

.strong {
    font-weight: bold;
    fill: #000;
}

.soil {
    fill: #4c3c10;
}

.soil .strong {
    fill: #181808;
    font-weight: normal;
}

.sub {
    font-size: 6px;
}

.depth {
    fill: #2828b8;
}

.sidebar {
    display: flex;
    flex-direction: column;
    flex: none;
    width: 34px;
    padding: 2px 1px;
    background: linear-gradient(to right, #c2c2c2, #f4f4f4);
}

.sidebar button {
    width: 32px;
    height: 30px;
    border: 1px solid transparent;
}

.sidebar svg {
    width: 24px;
    height: 24px;
    shape-rendering: crispEdges;
}

.sidebar .active {
    border-color: #5078b0;
    background: #b8c8ec;
}

/* lettering inside the icons */
.unit, .norm, .opz, .axis, .dxf, .dist, .fs {
    font-family: "DejaVu Sans Condensed", sans-serif;
    font-weight: bold;
}

.unit {
    font-size: 11px;
}

.norm {
    font-size: 7px;
}

.opz {
    font-size: 8px;
    fill: #801010;
}

.axis {
    font-size: 8px;
    font-weight: normal;
}

.abc {
    font: italic 11px "Liberation Serif", serif;
}

.big-t {
    font: bold 23px "Liberation Serif", serif;
    fill: #1830d0;
}

.dist {
    font-size: 9px;
    fill: #108020;
}

.dxf {
    font-size: 10px;
}

.fs {
    font-size: 8px;
}

/* status */
.statusbar {
    display: flex;
    gap: 1px;
    flex: none;
    height: 24px;
    padding: 1px 0 2px 1px;
    background: linear-gradient(to right, #404040 48px, #e8e8e8 48px, #e8e8e8 391px, #404040 391px) bottom / 100% 2px no-repeat #f0f0f0;
}

.panel {
    display: flex;
    align-items: center;
    flex: 1;
    border-top: 1px solid #a0a0a0;
    border-left: 1px solid #a0a0a0;
}

.address {
    flex: 0 0 72%;
    padding-left: 12px;
    border-right: 1px solid #fff;
    white-space: nowrap;
}
```
